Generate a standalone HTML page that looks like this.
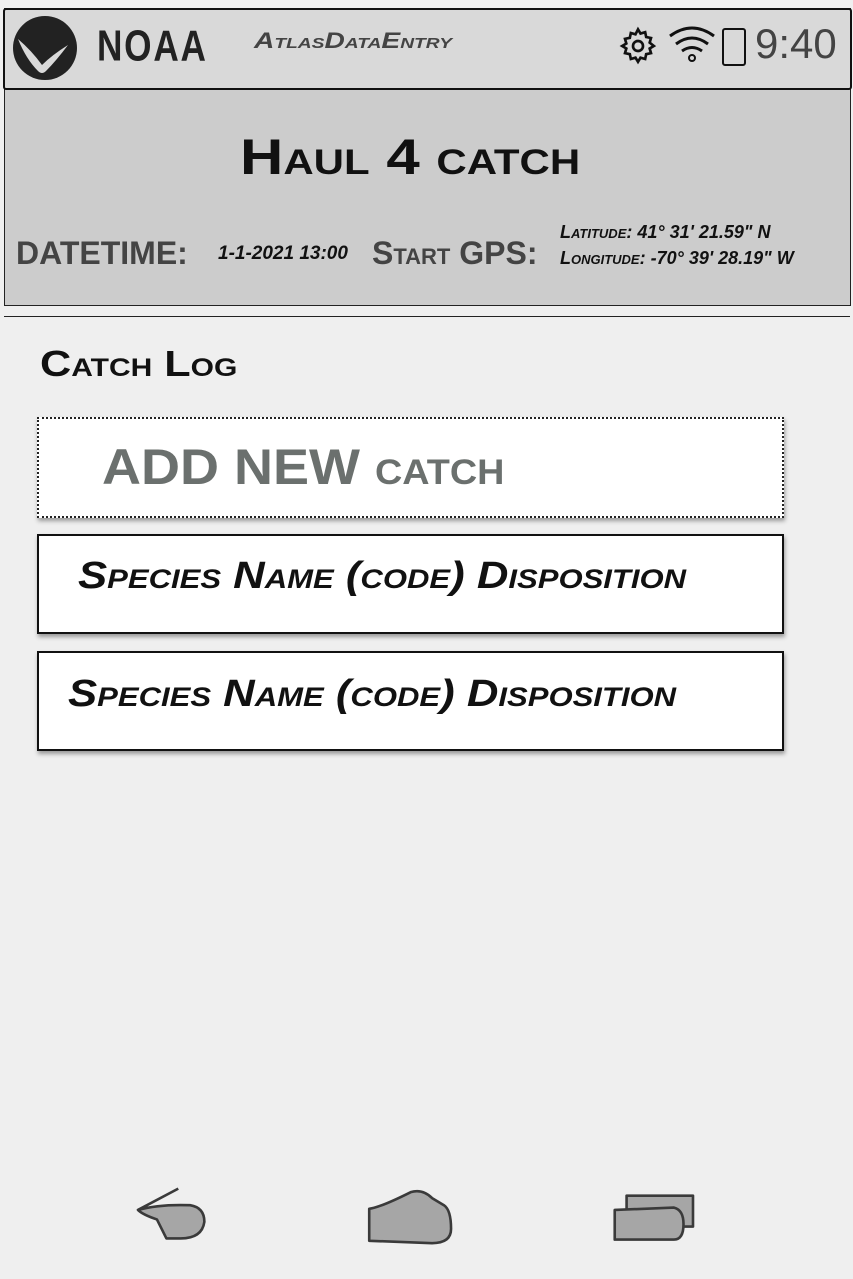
<!DOCTYPE html>
<html><head><meta charset="utf-8"><style>
body{margin:0;width:853px;height:1279px;background:#efefef;position:relative;overflow:hidden;font-family:"Liberation Sans",sans-serif}
.a{position:absolute;transform-origin:0 0}
.sc{font-variant:small-caps;font-weight:bold;font-style:italic;white-space:nowrap}
</style></head><body>
<div class="a" style="left:4px;top:8px;width:845px;height:296px;background:#cccccc;border:1px solid #222"></div>
<div class="a" style="left:3px;top:8px;width:845px;height:78px;background:#d9d9d9;border:2px solid #111;border-radius:3px"></div>
<svg class="a" style="left:12px;top:15px" width="68" height="66" viewBox="0 0 68 66"><ellipse cx="33" cy="33" rx="32" ry="32" fill="#222"/><path d="M6 24 Q20 36 30 50 Q40 40 56 30 Q44 46 34 56 Q30 60 26 56 Q14 44 6 24Z" fill="#d9d9d9"/></svg>
<div class="a" style="left:97px;top:22px;font-size:40px;font-weight:bold;color:#222;letter-spacing:2px;transform:scale(0.88,1.1)">NOAA</div>
<div class="a sc" style="left:254px;top:28px;font-size:22px;color:#444;transform:scaleX(1.28)">AtlasDataEntry</div>
<svg class="a" style="left:618px;top:26px" width="40" height="40" viewBox="0 0 24 24"><path fill="none" stroke="#111" stroke-width="1.6" d="M12 2l1.5 2.5 2.8-.8.6 2.9 2.9.6-.8 2.8L21.5 12l-2.5 1.5.8 2.8-2.9.6-.6 2.9-2.8-.8L12 21.5l-1.5-2.5-2.8.8-.6-2.9-2.9-.6.8-2.8L2.5 12 5 10.5l-.8-2.8 2.9-.6.6-2.9 2.8.8z"/><circle cx="12" cy="12" r="3" fill="none" stroke="#111" stroke-width="1.6"/></svg>
<svg class="a" style="left:668px;top:24px" width="48" height="40" viewBox="0 0 48 40"><path d="M2 12Q24-4 46 12M8 20Q24 8 40 20M14 27Q24 20 34 27" fill="none" stroke="#111" stroke-width="3"/><circle cx="24" cy="34" r="3" fill="none" stroke="#111" stroke-width="2"/></svg>
<div class="a" style="left:722px;top:28px;width:20px;height:34px;border:2px solid #111;border-radius:3px"></div>
<div class="a" style="left:755px;top:20px;font-size:42px;color:#444">9:40</div>
<div class="a sc" style="left:240px;top:128px;font-size:50px;color:#111;font-style:normal;transform:scaleX(1.2)">Haul 4 catch</div>
<div class="a sc" style="left:16px;top:235px;font-size:32px;color:#444;font-style:normal">DATETIME:</div>
<div class="a sc" style="left:218px;top:243px;font-size:19px;color:#111">1-1-2021 13:00</div>
<div class="a sc" style="left:372px;top:235px;font-size:32px;color:#444;font-style:normal">Start GPS:</div>
<div class="a sc" style="left:560px;top:222px;font-size:18px;color:#111">Latitude: 41° 31' 21.59" N</div>
<div class="a sc" style="left:560px;top:248px;font-size:18px;color:#111">Longitude: -70° 39' 28.19" W</div>
<div class="a" style="left:4px;top:316px;width:846px;height:1px;background:#222"></div>
<div class="a sc" style="left:40px;top:343px;font-size:36px;color:#111;font-style:normal;transform:scaleX(1.2)">Catch Log</div>
<div class="a" style="left:37px;top:417px;width:743px;height:97px;background:#fff;border:2px dotted #222;box-shadow:1px 3px 4px #999"></div>
<div class="a sc" style="left:102px;top:438px;font-size:50px;color:#6b706e;font-style:normal;transform:scaleX(1.08)">ADD NEW catch</div>
<div class="a" style="left:37px;top:534px;width:743px;height:96px;background:#fff;border:2px solid #111;box-shadow:1px 3px 4px #999"></div>
<div class="a sc" style="left:78px;top:555px;font-size:38px;color:#111;transform:scaleX(1.15)">Species Name (code) Disposition</div>
<div class="a" style="left:37px;top:651px;width:743px;height:96px;background:#fff;border:2px solid #111;box-shadow:1px 3px 4px #999"></div>
<div class="a sc" style="left:68px;top:673px;font-size:38px;color:#111;transform:scaleX(1.15)">Species Name (code) Disposition</div>
<svg class="a" style="left:100px;top:1172px" width="620" height="80" viewBox="0 0 620 80"><g transform="scale(1.186)" stroke="#3a3a3a" stroke-width="2.2" fill="#a6a6a6" stroke-linejoin="round"><path d="M66 14L32 32Q50 27 76 28Q88 30 88 42Q86 56 68 56L56 56L48 40Q36 36 32 32"/><path d="M227 31Q236 30 262 17Q272 14 280 22L290 28Q296 32 296 48Q296 60 280 60L227 58Z"/><path d="M444 20L500 20L500 46L444 46Z"/><path d="M434 32L484 30Q492 32 492 44Q492 57 484 57L434 57Z"/></g></svg>
</body></html>
